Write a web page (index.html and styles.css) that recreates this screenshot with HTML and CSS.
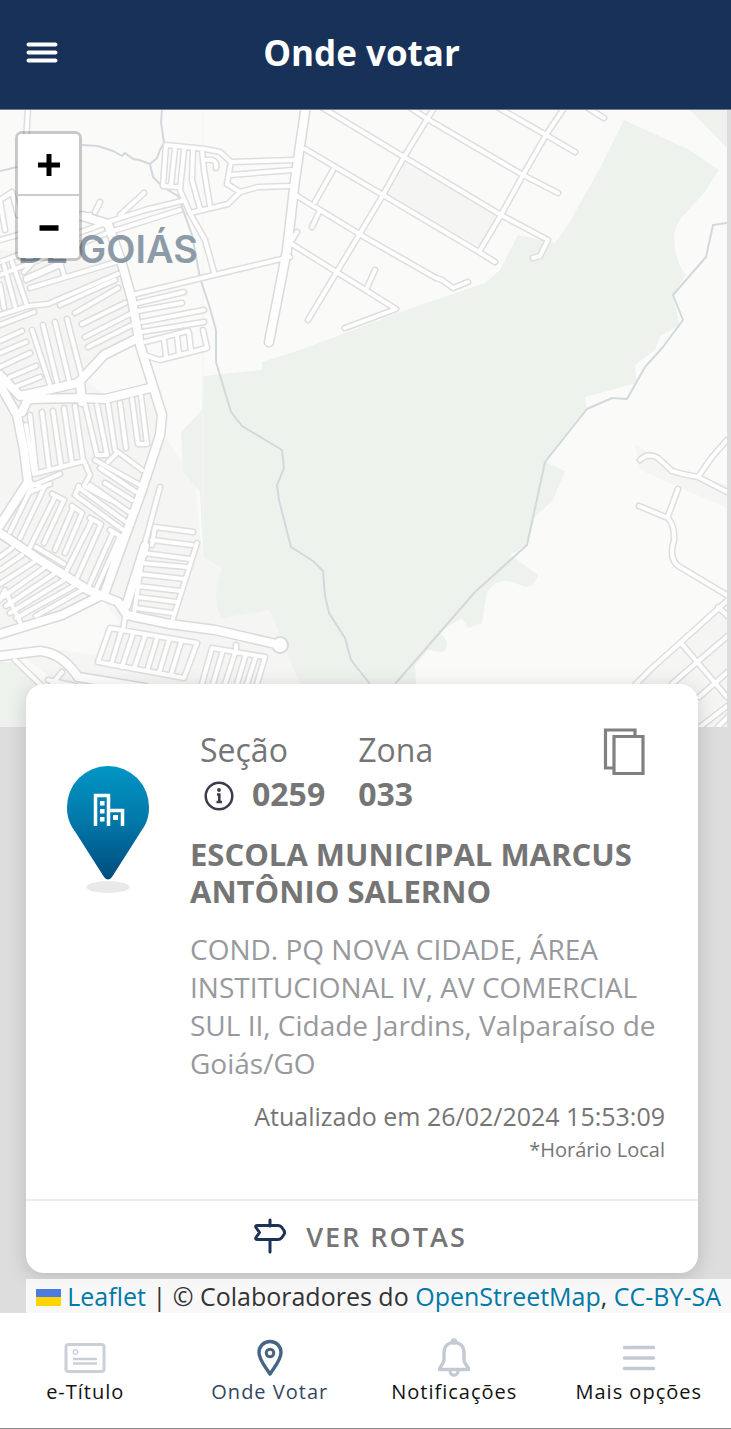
FILE: index.html
```html
<!DOCTYPE html>
<html lang="pt-BR">
<head>
<meta charset="utf-8">
<meta name="viewport" content="width=device-width, initial-scale=1">
<title>Onde votar</title>
<link rel="stylesheet" href="styles.css">
</head>
<body>
<header class="topbar">
  <button class="menu-btn" type="button" aria-label="Menu">
    <svg width="32" height="24" viewBox="0 0 32 24"><path d="M2.500 3.500h27M2.500 11.500h27M2.500 19.500h27" stroke="#fff" stroke-width="4" stroke-linecap="round"/></svg>
  </button>
  <h1 class="topbar-title">Onde votar</h1>
</header>

<main class="map">
  <svg class="tiles" width="727" height="617" viewBox="0 110 727 617" aria-hidden="true">
    <defs>
      <g id="minor">
        <path d="M28 105L26 145M318 105L404 157L501 215L548 240L540 256L533 258M305 149L383 195L479 252L495 262M297 196L366 238L436 278L442 280L453 288L468 282M411 108L429 120L523 175L558 193M499 108L546 135L575 152M588 108L604 118M434 108L404 157L383 195L308 320M564 108L546 135L523 175L501 215L479 252M333 170L315 202M320 210L312 227M290 243L396 309L345 328M375 270L366 290M297 232L290 243"/>
        <path d="M640 460Q648 452 658 458L672 471Q685 475 698 477L727 492M698 477L712 457L727 440M678 489L668 516M639 506L668 518Q675 526 674 540Q668 560 680 567L730 597M730 598L680 643L652 668L636 684M681 643L727 697M718 607L730 618M730 634L696 663L672 684M730 670L699 697M730 704L700 727M730 715L718 727"/>
        <path d="M166 145L205 149L220 152L231 162L294 160M231 162L227 184L240 192L258 187L290 186M230 175L293 170M240 192L228 204L190 213M166 145L163 186L178 187M175 148L171 186M184 150L180 190L190 213M193 150L192 180L200 209M202 150L204 170L210 206M205 160Q218 158 216 168"/>
        <path d="M182 201L145 210L108 222L0 262M180 210L110 232L0 275M120 215L144 193M95 212L100 202M0 240L90 215M5 230L0 200L12 192L18 215M290 257L214 275L132 295M190 213L205 240L214 272M40 255L24 272M26 280L60 265M30 288L116 262M60 305L115 280M75 313L118 288M82 324L125 303M85 337L130 314M88 347L132 325M26 278L62 262M64 275L60 262"/>
        <path d="M138 303L184 292M138 311L182 303M142 322L204 310M142 332L204 322M145 342L188 331M147 356L160 360L207 348L203 330M166 356L164 340M179 354L177 336M191 351L189 333"/>
        <path d="M0 315L28 306L48 304L118 274M4 308L0 285M15 306L4 265M26 303L12 262M32 330L50 385M43 325L57 382M55 322L69 380M67 319L82 377M0 325L34 312M0 341L22 331M0 353L26 342M0 367L30 353M10 377L36 366M15 387L40 377"/>
        <path d="M30 415L36 470M42 412L49 468M53 411L61 466M64 408L72 463M75 406L83 460M85 404L97 455H107L97 405M108 404L115 450M120 403L126 448M132 399L138 444H147L141 396M26 425L34 474L84 461L90 475L84 486L110 500M95 460L140 485M108 462L118 452L142 470M34 485L60 474M30 492L50 484M100 468L136 492"/>
        <path d="M33 484L10 532M30 483L44 488L20 538M55 497L30 547M52 494L64 500L44 543M73 508L55 550M72 506L82 513L65 553M92 520L66 572M90 518L101 524L76 580M113 532L88 588M110 530L120 536L95 592M36 547L64 564M104 592L118 545M75 495L123 530M78 487L126 522M90 485L129 512M105 483L132 500M75 495L79 486"/>
        <path d="M0 557L12 548M0 570L22 555M0 584L34 562M3 597L44 568M6 606L54 574M10 613L64 580M16 618L74 586M0 600L5 590L20 622M36 616L82 590"/>
        <path d="M160 487L145 543M155 527L193 532M155 527L152 545M152 540L192 545M144 553L190 559M142 563L187 567M140 574L184 579M138 586L181 591M137 597L177 602M136 608L172 613M197 543L171 625M144 546L134 614"/>
        <path d="M110 628L98 662L184 678L197 643ZM121 632L111 665M133 634L122 667M145 636L134 669M157 638L147 671M169 640L159 673M181 642L171 675M125 618L123 630M212 648L202 684M212 648L235 652L265 657L257 684M223 650L213 684M236 650L225 684M246 654L237 684M256 656L247 684M236 652V645M15 660L42 686M52 684L62 672M48 680L75 686"/>
      </g>
      <g id="major">
        <path d="M306 105L295 180L287 250L269 342M82 216L108 224L122 264L132 300L140 345L162 415L160 435L142 490L122 545L105 592M0 375L20 396L78 383L104 355L136 339M0 385L17 415L24 450L28 482L0 525M22 412L28 399L80 398L105 399L150 388M0 533L40 560L88 590L118 602L127 615L170 624L215 630L280 645M0 634L62 615L102 595M145 546L126 606M80 382L82 402M0 656L40 651Q62 653 78 677L145 688"/>
      </g>
    </defs>
    <rect y="110" width="727" height="617" fill="#fafbf9"/>
    <path fill="#f5f5f4" d="M0 250L120 260L160 430L195 480L202 555L222 568L215 595L272 610L300 684H60L0 640ZM405 163L497 213L481 248L388 195ZM635 445L680 470L727 485V508L640 470ZM727 600L640 684L690 727H727Z"/>
    <path fill="#fafbf9" d="M0 635L100 596L120 622L95 655L60 650L0 650ZM82 378L108 355L138 343L150 385L106 396Z"/>
    <path fill="#edf2ed" d="M624 120L690 150L719 170L705 192L682 217Q674 228 674 238Q675 262 686 275L673 295L680 325L660 336L655 350L635 365L637 383L585 397L587 409L545 462L565 471L553 500L535 517L527 545L510 555L518 560L538 575Q532 592 520 585Q500 574 487 592L482 623L468 628L462 618L440 632Q452 645 443 652L428 650L415 665L416 684H300L290 660L270 610L222 618Q210 600 222 568L203 557L200 492L183 472L181 432L202 410L203 376L262 370V362L300 350L400 312L485 283L500 270L518 235L555 243L566 228L600 168ZM690 110H727V148ZM0 662L16 662L42 686V727H0Z"/>
    <path fill="none" stroke="#f4f4f3" d="M203 110V684"/>
    <g fill="none" stroke="#d2d9dc" stroke-width="2" stroke-linejoin="round">
      <path d="M162 110L161 122L164 143L160 150L157 158L150 164L139 160L133 159L125 153L122 156L113 151L98 146L82 145M17 167L0 171M150 164L153 177L163 187L178 196L192 235L200 278L209 305L216 330V362L231 412L242 426L282 450L284 468L277 485L279 500L291 547L313 561L323 571L325 596L329 613L345 638L351 660L370 684"/>
      <path d="M727 223L713 225L706 257L673 295L683 320L663 347L645 367L627 399L612 398L587 409L545 462L527 545L475 592L395 684"/>
    </g>
    <g fill="none" stroke-linejoin="round" stroke-linecap="round">
      <use href="#minor" stroke="#dedede" stroke-width="7"/>
      <use href="#major" stroke="#dadada" stroke-width="11"/>
      <circle cx="280" cy="645" r="8" fill="#fff" stroke="#dadada" stroke-width="2"/>
      <use href="#minor" stroke="#fefefe" stroke-width="4"/>
      <use href="#major" stroke="#fefefe" stroke-width="8"/>
    </g>
    <text class="place" x="198" y="263" text-anchor="end">DE GOIÁS</text>
  </svg>

  <div class="zoom">
    <button type="button" aria-label="Aproximar"><svg width="24" height="24" viewBox="0 0 24 24"><path d="M1 13h22M12 2v22" stroke="#000" stroke-width="5"/></svg></button>
    <button type="button" aria-label="Afastar"><svg width="24" height="24" viewBox="0 0 24 24"><path d="M2.500 13h19" stroke="#000" stroke-width="5.500"/></svg></button>
  </div>

  <section class="card">
    <div class="card-body">
      <svg class="pin" width="84" height="128" viewBox="0 0 84 128" aria-hidden="true">
        <defs><linearGradient id="pinfill" x1="0" y1="0" x2="0" y2="1"><stop offset="0" stop-color="#0295c4"/><stop offset=".5" stop-color="#0177a8"/><stop offset="1" stop-color="#004c7c"/></linearGradient></defs>
        <ellipse cx="42" cy="121" rx="21.500" ry="6" fill="#e9e9e9"/>
        <path d="M42 0A41 41 0 0 0 1 42C1 53 5 60 10 67L38 111Q42 116 46 111L74 67C79 60 83 53 83 42A41 41 0 0 0 42 0Z" fill="url(#pinfill)"/>
        <path d="M29.500 60V29.500H42.500V60M42.500 44.500H56.500V60" fill="none" stroke="#fff" stroke-width="3.500"/>
        <path d="M34 35h4.500v4.500H34zM34 43h4.500v4.500H34zM34 51h4.500v4.500H34zM47 49h5v5h-5z" fill="#fff"/>
      </svg>
      <div class="details">
        <dl class="facts">
          <div class="fact">
            <dt>Seção</dt>
            <dd><svg class="info" width="30" height="30" viewBox="0 0 30 30" aria-hidden="true"><circle cx="15" cy="15" r="13.300" fill="none" stroke="#3e3a4d" stroke-width="2.500"/><circle cx="15" cy="9" r="1.900" fill="#3e3a4d"/><path d="M13 13.500h2.300V21M12.500 21h5.500" fill="none" stroke="#3e3a4d" stroke-width="2.600"/></svg>0259</dd>
          </div>
          <div class="fact">
            <dt>Zona</dt>
            <dd>033</dd>
          </div>
          <button class="copy" type="button" aria-label="Copiar">
            <svg width="42" height="48" viewBox="0 0 42 48"><path d="M10 40H2.500V2H32V8M11 8.500H40V45.500H11Z" fill="none" stroke="#808080" stroke-width="3.200"/></svg>
          </button>
        </dl>
        <h2 class="place-name">ESCOLA MUNICIPAL MARCUS ANTÔNIO SALERNO</h2>
        <p class="address">COND. PQ NOVA CIDADE, ÁREA INSTITUCIONAL IV, AV COMERCIAL SUL II, Cidade Jardins, Valparaíso de Goiás/GO</p>
        <p class="updated">Atualizado em 26/02/2024 15:53:09</p>
        <p class="local">*Horário Local</p>
      </div>
    </div>
    <button class="routes" type="button">
      <svg width="34" height="36" viewBox="0 0 34 36" aria-hidden="true"><path d="M17 2V8M17 22V34M4.500 7.500H25Q27 7.500 28.500 9L31 12.500Q32 14.500 31 16.500L28.500 20Q27 21.500 25 21.500H4.500Q2 21.500 3 19.500L6.500 14.500L3 9.500Q2 7.500 4.500 7.500Z" fill="none" stroke="#1b3157" stroke-width="3" stroke-linecap="round" stroke-linejoin="round"/></svg>
      <span>VER ROTAS</span>
    </button>
  </section>

  <p class="credit">
    <a href="#leaflet"><svg width="25" height="17" viewBox="0 0 25 17" aria-hidden="true"><path fill="#4c7be1" d="M0 0h25v9H0z"/><path fill="#ffd500" d="M0 8h25v9H0z"/></svg> Leaflet</a> | © Colaboradores do <a href="#osm">OpenStreetMap</a>, <a href="#license">CC-BY-SA</a>
  </p>
</main>

<nav class="tabs">
  <a class="tab" href="#titulo">
    <svg width="42" height="38" viewBox="0 0 42 38"><rect x="2" y="5.500" width="38" height="27" rx="2.500" fill="none" stroke="#c9d0d8" stroke-width="3"/><circle cx="11.500" cy="13" r="2.300" fill="none" stroke="#c9d0d8" stroke-width="1.300"/><path d="M9 20h24M9 24.500h24" stroke="#c9d0d8" stroke-width="2.500"/></svg>
    <span>e-Título</span>
  </a>
  <a class="tab tab-active" href="#onde-votar" aria-current="page">
    <svg width="28" height="38" viewBox="0 0 28 38"><path d="M14 2.500C7.500 2.500 3 7.500 3 13.500C3 21 9.500 28 14 35C18.500 28 25 21 25 13.500C25 7.500 20.500 2.500 14 2.500Z" fill="none" stroke="#456582" stroke-width="3.400" stroke-linejoin="round"/><circle cx="14" cy="14" r="3.800" fill="none" stroke="#456582" stroke-width="3"/></svg>
    <span>Onde Votar</span>
  </a>
  <a class="tab" href="#notificacoes">
    <svg width="34" height="40" viewBox="0 0 34 40"><path d="M17 4.500C10.500 4.500 7 9 7 15V22C7 26 2.500 28 2.500 31.500H31.500C31.500 28 27 26 27 22V15C27 9 23.500 4.500 17 4.500Z" fill="none" stroke="#c4cad4" stroke-width="3.400" stroke-linejoin="round"/><circle cx="17" cy="3.500" r="3.300" fill="#c4cad4"/><path d="M13 33C13.500 38.500 20.500 38.500 21 33" fill="none" stroke="#c4cad4" stroke-width="3"/></svg>
    <span>Notificações</span>
  </a>
  <a class="tab" href="#opcoes">
    <svg width="34" height="38" viewBox="0 0 34 38"><path d="M2.500 8.500h29M2.500 19h29M2.500 29.500h29" stroke="#c4cad4" stroke-width="3.500" stroke-linecap="round"/></svg>
    <span>Mais opções</span>
  </a>
</nav>
</body>
</html>
```
FILE: styles.css
```css
* {
  box-sizing: border-box;
}

body {
  margin: 0;
  min-height: 100vh;
  display: flex;
  flex-direction: column;
  font-family: "Open Sans", "Noto Sans", sans-serif;
  background: #fff;
  border-bottom: 1px solid #8a8a8a;
}

h1, h2, p, dl, dt, dd {
  margin: 0;
}

button {
  font: inherit;
  border: 0;
  padding: 0;
  background: none;
}

svg {
  display: block;
  flex: none;
}

a {
  text-decoration: none;
}

.topbar {
  display: grid;
  grid-template-columns: 32px 1fr 32px;
  align-items: center;
  height: 110px;
  padding: 0 34px 4px 26px;
  background: #183158;
  border-bottom: 1px solid #6d7a90;
}

.topbar-title {
  text-align: center;
  color: #fff;
  font-size: 35px;
  font-weight: 700;
  line-height: 48px;
}

.map {
  position: relative;
  flex: 1;
  display: flex;
  flex-direction: column;
  justify-content: flex-end;
  background: #ddd;
  overflow: hidden;
}

.tiles {
  position: absolute;
  top: 0;
  left: 0;
}

.place {
  font-family: Inter, "Open Sans", sans-serif;
  font-size: 38px;
  font-weight: 600;
  fill: #8d9aa8;
}

.zoom {
  position: absolute;
  top: 21px;
  left: 15px;
  display: flex;
  flex-direction: column;
  border: 3px solid rgba(0, 0, 0, 0.2);
  border-radius: 7px;
  background-clip: padding-box;
}

.zoom button {
  display: grid;
  place-items: center;
  width: 61px;
  height: 62px;
  background: #fff;
  border-radius: 0 0 4px 4px;
}

.zoom button:first-child {
  border-bottom: 2px solid #ccc;
  border-radius: 4px 4px 0 0;
}

.card {
  position: relative;
  margin: 0 33px 6px 26px;
  background: #fff;
  border-radius: 18px;
  box-shadow: 0 4px 20px rgba(0, 0, 0, 0.16);
}

.card-body {
  display: flex;
  gap: 40px;
  padding: 44px 33px 32px 40px;
  border-bottom: 2px solid #ebebeb;
}

.pin {
  margin-top: 38px;
}

.details {
  flex: 1;
  color: #757575;
}

.facts {
  display: flex;
  gap: 33px;
  padding: 0 20px 0 10px;
  font-size: 32px;
  line-height: 44px;
}

.fact dd {
  display: flex;
  align-items: center;
  gap: 18px;
  padding-left: 4px;
  font-weight: 700;
}

.fact + .fact dd {
  padding-left: 0;
}

.info {
  margin-top: 4px;
}

.copy {
  align-self: flex-start;
  margin-left: auto;
}

.place-name {
  margin-top: 20px;
  font-size: 31px;
  line-height: 37px;
  font-weight: 700;
}

.address {
  margin-top: 20px;
  font-size: 28px;
  line-height: 38px;
  color: #97999c;
}

.updated {
  margin-top: 17px;
  text-align: right;
  font-size: 25px;
  line-height: 34px;
}

.local {
  text-align: right;
  font-size: 20px;
  line-height: 34px;
}

.routes {
  display: flex;
  justify-content: center;
  align-items: center;
  gap: 19px;
  width: 100%;
  height: 72px;
  padding: 0 4px 2px 0;
  color: #757575;
  font-size: 27px;
  font-weight: 600;
  letter-spacing: 2px;
}

.credit {
  position: relative;
  align-self: flex-end;
  padding: 0 10px;
  background: rgba(255, 255, 255, 0.8);
  color: #333;
  font-size: 25px;
  line-height: 34px;
  white-space: nowrap;
}

.credit a {
  color: #0078a8;
}

.credit svg {
  display: inline-block;
}

.tabs {
  display: grid;
  grid-template-columns: repeat(4, 1fr);
  height: 115px;
  margin-left: -7px;
  padding-top: 25px;
  background: #fff;
}

.tab {
  display: flex;
  flex-direction: column;
  align-items: center;
  color: #111;
  font-size: 20px;
  line-height: 28px;
  letter-spacing: 1px;
}

.tab svg {
  height: 40px;
}

.tab-active {
  color: #34465f;
}
```
